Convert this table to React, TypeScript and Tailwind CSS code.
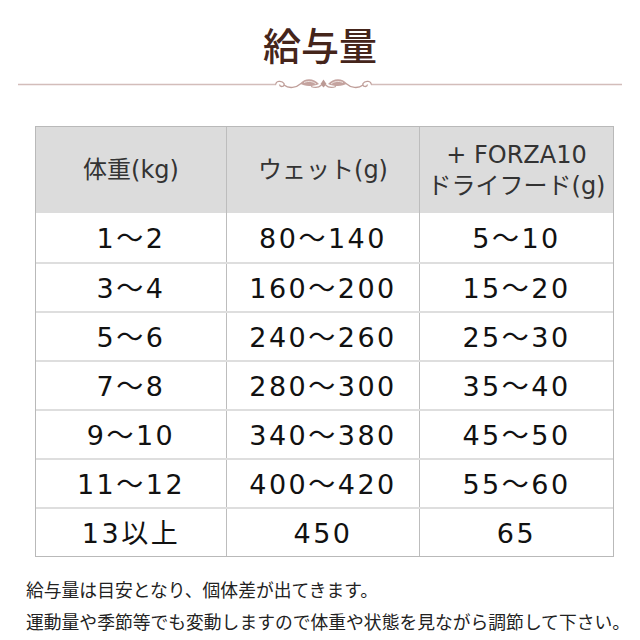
const rows: [string, string, string][] = [
  ["1～2", "80～140", "5～10"],
  ["3～4", "160～200", "15～20"],
  ["5～6", "240～260", "25～30"],
  ["7～8", "280～300", "35～40"],
  ["9～10", "340～380", "45～50"],
  ["11～12", "400～420", "55～60"],
  ["13以上", "450", "65"],
];

const jp = { fontFamily: '"DejaVu Sans", "Noto Sans CJK JP", sans-serif' };

const Ornament = () => {
  const half = (
    <g>
      <path d="M276 10.5 C275 7, 282 6, 284 9.5 C285 13, 280 13.5, 279.5 10.5" fill="none" stroke="#bf9e99" strokeWidth="1.3" />
      <path d="M284 11 C289 15, 296 14, 301 9.5" fill="none" stroke="#bf9e99" strokeWidth="1.3" />
      <path d="M300 9.5 C305 3.5, 314 4, 319 10 C312 13, 304 12.5, 300 9.5Z" fill="#c4a39f" />
      <path d="M304 8.5 C309 6.5, 313 7.5, 316 10" fill="none" stroke="#f3e9e7" strokeWidth="0.9" />
      <path d="M311 12.5 C315 14, 319 13.5, 321.5 11" fill="none" stroke="#bf9e99" strokeWidth="1.2" />
    </g>
  );
  return (
    <svg width="640" height="20" viewBox="0 0 640 20" className="block">
      <line x1="18" y1="10.5" x2="276" y2="10.5" stroke="#d3bdba" strokeWidth="1.3" />
      <line x1="371" y1="10.5" x2="622" y2="10.5" stroke="#d3bdba" strokeWidth="1.3" />
      {half}
      <g transform="translate(647,0) scale(-1,1)">{half}</g>
      <path d="M323.5 5.5 L326.5 10 L323.5 13.5 L320.5 10Z" fill="#bb9a95" />
    </svg>
  );
};

export default function App() {
  return (
    <div className="w-[640px] h-[640px] bg-white overflow-hidden" style={jp}>
      <h1
        className="pt-[22px] text-center text-[38px] leading-[44px] font-medium text-[#45251b]"
        style={{ fontFamily: '"Noto Sans CJK JP", serif' }}
      >
        給与量
      </h1>
      <div className="mt-[8px] h-[20px]">
        <Ornament />
      </div>
      <div className="mt-[32px] ml-[35px] w-[579px] border border-[#b9b9b9]">
        <div className="grid grid-cols-[190px_193px_194px] h-[86px] bg-[#dcdcdc] text-[24px] text-[#333] leading-[31px]">
          <div className="flex items-center justify-center">体重(kg)</div>
          <div className="flex items-center justify-center border-l border-[#bdbdbd]">ウェット(g)</div>
          <div className="flex flex-col items-center justify-center border-l border-[#bdbdbd] pt-[2px]">
            <span>+ FORZA10</span>
            <span>ドライフード(g)</span>
          </div>
        </div>
        {rows.map((r, i) => (
          <div
            key={i}
            className={`grid grid-cols-[190px_193px_194px] h-[49px] text-[27px] text-[#111] tracking-[2.5px] ${
              i > 0 ? "border-t-2 border-[#dedede]" : ""
            }`}
          >
            {r.map((c, j) => (
              <div
                key={j}
                className={`flex items-center justify-center pt-[3px] ${j > 0 ? "border-l border-[#bdbdbd]" : ""}`}
              >
                {c}
              </div>
            ))}
          </div>
        ))}
      </div>
      <div className="mt-[16px] pl-[26px] text-[17.8px] leading-[32px] text-[#222]" style={{ fontFamily: '"Noto Sans CJK JP", sans-serif' }}>
        <p>給与量は目安となり、個体差が出てきます。</p>
        <p>運動量や季節等でも変動しますので体重や状態を見ながら調節して下さい。</p>
      </div>
    </div>
  );
}
